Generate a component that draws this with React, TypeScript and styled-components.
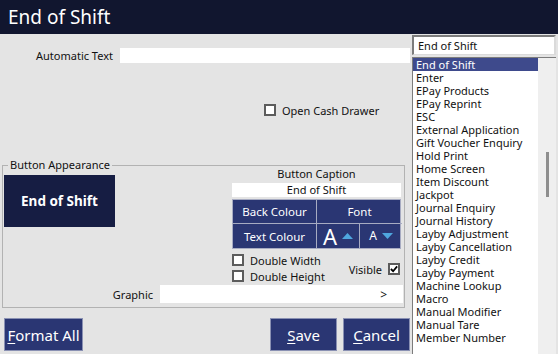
import styled, { createGlobalStyle } from "styled-components";

const GlobalStyle = createGlobalStyle`
  html, body {
    margin: 0;
    padding: 0;
    background: #e4e4e4;
  }
  * {
    box-sizing: border-box;
  }
`;

const Window = styled.div`
  width: 558px;
  height: 354px;
  overflow: hidden;
  background: #e4e4e4;
  font-family: "Noto Sans", "Open Sans", sans-serif;
  font-size: 11px;
  color: #111;
`;

const TitleBar = styled.div`
  height: 34px;
  background: #11162f;
  color: #fff;
  font-size: 19px;
  line-height: 34px;
  padding-left: 8px;
`;

const Body = styled.div`
  display: flex;
  height: 320px;
`;

const LeftPane = styled.div`
  width: 410px;
  display: flex;
  flex-direction: column;
`;

const RightPane = styled.div`
  width: 144px;
  margin-left: 2px;
  padding-top: 1px;
  display: flex;
  flex-direction: column;
`;

const FieldRow = styled.div<{ $top: number; $labelWidth: number; $height: number }>`
  display: flex;
  align-items: center;
  margin-top: ${(p) => p.$top}px;
  height: ${(p) => p.$height}px;
  & > label {
    width: ${(p) => p.$labelWidth}px;
    text-align: right;
    flex-shrink: 0;
  }
`;

const TextBox = styled.div<{ $gap: number }>`
  flex: 1;
  height: 100%;
  margin-left: ${(p) => p.$gap}px;
  background: #fff;
  display: flex;
  align-items: center;
  justify-content: flex-end;
  padding-right: 16px;
  font-size: 12px;
`;

const CheckRow = styled.div<{ $indent?: number }>`
  display: flex;
  align-items: center;
  gap: 6px;
  height: 12px;
  padding-left: ${(p) => p.$indent ?? 0}px;
  white-space: nowrap;
`;

const Box = styled.span`
  width: 12px;
  height: 12px;
  flex-shrink: 0;
  background: #fff;
  border: 2px solid #5c5c5c;
  display: flex;
  align-items: center;
  justify-content: center;
`;

const GroupBox = styled.div`
  position: relative;
  margin: 49px 0 0 2px;
  width: 403px;
  border: 1px solid #b2b2b2;
  display: flex;
  flex-direction: column;
  padding: 0 0 4px;
`;

const GroupTitle = styled.span`
  position: absolute;
  top: -9px;
  left: 5px;
  padding: 0 2px;
  background: #e4e4e4;
  line-height: 16px;
`;

const GroupTop = styled.div`
  display: flex;
  align-items: flex-start;
`;

const Preview = styled.div`
  width: 111px;
  height: 52px;
  margin: 9px 0 0 1px;
  background: #161d43;
  color: #fff;
  font-weight: 700;
  font-size: 13.5px;
  display: flex;
  align-items: center;
  justify-content: center;
`;

const Controls = styled.div`
  width: 169px;
  margin: 0 3px 0 auto;
  display: flex;
  flex-direction: column;
`;

const CaptionLabel = styled.div`
  height: 16px;
  line-height: 16px;
  text-align: center;
`;

const CaptionBox = styled.div`
  margin-top: 1px;
  height: 14px;
  line-height: 14px;
  background: #fff;
  text-align: center;
`;

const StyleGrid = styled.div`
  margin-top: 2px;
  display: grid;
  grid-template-columns: 84px 43px 42px;
  grid-template-rows: 24px 24px;
  background: #2a3673;
  border: 1px solid #a7abc2;
  font-size: 11.5px;
`;

const Cell = styled.div<{ $span?: number }>`
  grid-column: span ${(p) => p.$span ?? 1};
  color: #fff;
  display: flex;
  align-items: center;
  justify-content: center;
  gap: 5px;
  border-right: 1px solid #a7abc2;
  border-bottom: 1px solid #a7abc2;
  &:nth-child(2), &:last-child {
    border-right: none;
  }
  &:nth-child(n + 3) {
    border-bottom: none;
  }
`;

const Letter = styled.span<{ $size: number }>`
  font-size: ${(p) => p.$size}px;
  line-height: 1;
`;

const Options = styled.div`
  margin-top: 5px;
  height: 28px;
  display: flex;
  align-items: center;
  justify-content: space-between;
`;

const OptionStack = styled.div`
  display: flex;
  flex-direction: column;
  gap: 4px;
  align-self: flex-start;
`;

const VisibleCheck = styled(CheckRow)`
  gap: 6px;
  margin-right: 1px;
  margin-top: 2px;
`;

const BottomBar = styled.div`
  margin-top: 10px;
  display: flex;
  padding-left: 4px;
  gap: 6px;
`;

const ActionButton = styled.button<{ $width: number; $push?: boolean }>`
  width: ${(p) => p.$width}px;
  height: 33px;
  margin-left: ${(p) => (p.$push ? "auto" : "0")};
  background: #2a3673;
  border: 1px solid #8a91b3;
  color: #fff;
  font-family: inherit;
  font-size: 15px;
  padding: 0;
  & u {
    text-underline-offset: 2px;
  }
`;

const Combo = styled.div`
  height: 20px;
  background: #fff;
  border-top: 2px solid #7c7c7c;
  border-left: 2px solid #7c7c7c;
  border-right: 2px solid #dadada;
  border-bottom: 1px solid #dadada;
  padding-left: 4px;
  line-height: 17px;
`;

const ListBox = styled.div`
  margin-top: 2px;
  flex: 1;
  display: flex;
  border-top: 1px solid #7c7c7c;
  border-left: 1px solid #7c7c7c;
  overflow: hidden;
`;

const Items = styled.div`
  width: 125px;
  background: #fff;
`;

const Item = styled.div<{ $selected?: boolean }>`
  height: 13px;
  line-height: 13px;
  padding-left: 3px;
  white-space: nowrap;
  background: ${(p) => (p.$selected ? "#3e4a8c" : "transparent")};
  color: ${(p) => (p.$selected ? "#fff" : "#111")};
`;

const ScrollTrack = styled.div`
  flex: 1;
  background: #efefef;
  padding: 94px 0 0 8px;
`;

const Thumb = styled.div`
  width: 3px;
  height: 45px;
  background: #8e8e8e;
`;

const items = [
  "End of Shift",
  "Enter",
  "EPay Products",
  "EPay Reprint",
  "ESC",
  "External Application",
  "Gift Voucher Enquiry",
  "Hold Print",
  "Home Screen",
  "Item Discount",
  "Jackpot",
  "Journal Enquiry",
  "Journal History",
  "Layby Adjustment",
  "Layby Cancellation",
  "Layby Credit",
  "Layby Payment",
  "Machine Lookup",
  "Macro",
  "Manual Modifier",
  "Manual Tare",
  "Member Number",
];

const Triangle = ({ up }: { up?: boolean }) => (
  <svg width="11" height="6" viewBox="0 0 11 6">
    <polygon points={up ? "0,6 5.5,0 11,6" : "0,0 5.5,6 11,0"} fill="#4fa6de" />
  </svg>
);

const Tick = () => (
  <svg width="9" height="8" viewBox="0 0 9 8">
    <path d="M1 4 L3.5 6.5 L8 1" stroke="#000" strokeWidth="2" fill="none" />
  </svg>
);

export default function App() {
  return (
    <Window>
      <GlobalStyle />
      <TitleBar>End of Shift</TitleBar>
      <Body>
        <LeftPane>
          <FieldRow $top={14} $labelWidth={113} $height={15}>
            <label>Automatic Text</label>
            <TextBox $gap={7} />
          </FieldRow>
          <CheckRow $indent={264} style={{ marginTop: 41 }}>
            <Box />
            <span>Open Cash Drawer</span>
          </CheckRow>
          <GroupBox>
            <GroupTitle>Button Appearance</GroupTitle>
            <GroupTop>
              <Preview>End of Shift</Preview>
              <Controls>
                <CaptionLabel>Button Caption</CaptionLabel>
                <CaptionBox>End of Shift</CaptionBox>
                <StyleGrid>
                  <Cell>Back Colour</Cell>
                  <Cell $span={2}>Font</Cell>
                  <Cell>Text Colour</Cell>
                  <Cell>
                    <Letter $size={22}>A</Letter>
                    <Triangle up />
                  </Cell>
                  <Cell>
                    <Letter $size={12}>A</Letter>
                    <Triangle />
                  </Cell>
                </StyleGrid>
                <Options>
                  <OptionStack>
                    <CheckRow>
                      <Box />
                      <span>Double Width</span>
                    </CheckRow>
                    <CheckRow>
                      <Box />
                      <span>Double Height</span>
                    </CheckRow>
                  </OptionStack>
                  <VisibleCheck>
                    <span>Visible</span>
                    <Box>
                      <Tick />
                    </Box>
                  </VisibleCheck>
                </Options>
              </Controls>
            </GroupTop>
            <FieldRow $top={3} $labelWidth={150} $height={18}>
              <label>Graphic</label>
              <TextBox $gap={7} style={{ marginRight: 1 }}>&gt;</TextBox>
            </FieldRow>
          </GroupBox>
          <BottomBar>
            <ActionButton $width={79}>
              <u>F</u>ormat All
            </ActionButton>
            <ActionButton $width={67} $push>
              <u>S</u>ave
            </ActionButton>
            <ActionButton $width={67}>
              <u>C</u>ancel
            </ActionButton>
          </BottomBar>
        </LeftPane>
        <RightPane>
          <Combo>End of Shift</Combo>
          <ListBox>
            <Items>
              {items.map((it, i) => (
                <Item key={it} $selected={i === 0}>
                  {it}
                </Item>
              ))}
            </Items>
            <ScrollTrack>
              <Thumb />
            </ScrollTrack>
          </ListBox>
        </RightPane>
      </Body>
    </Window>
  );
}
